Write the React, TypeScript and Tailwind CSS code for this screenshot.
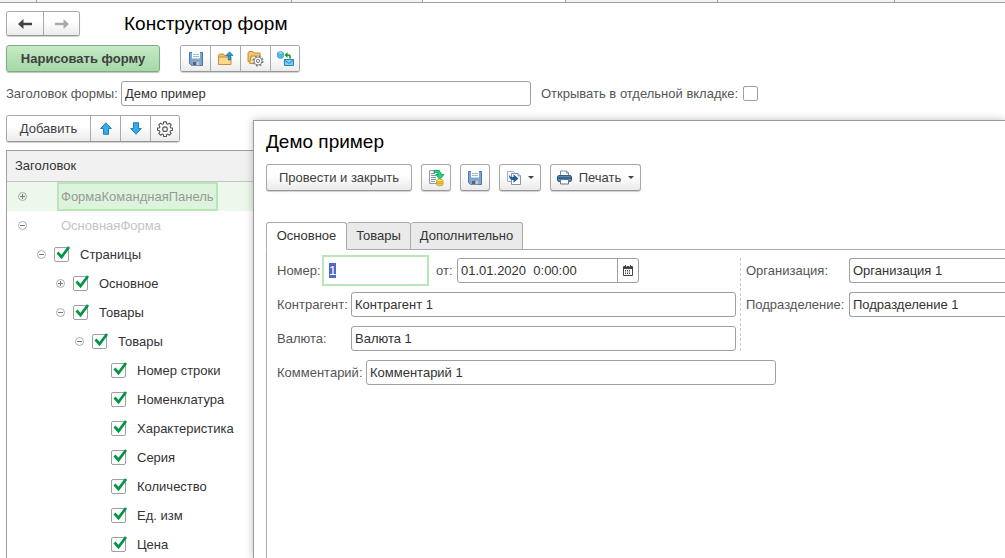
import React, { useEffect, useRef } from "react";

type TreeRow = {
  title: string;
  level: number;
  state?: "open" | "closed";
};

const rows: TreeRow[] = [
  { title: "Страницы", level: 1, state: "open" },
  { title: "Основное", level: 2, state: "closed" },
  { title: "Товары", level: 2, state: "open" },
  { title: "Товары", level: 3, state: "open" },
  { title: "Номер строки", level: 4 },
  { title: "Номенклатура", level: 4 },
  { title: "Характеристика", level: 4 },
  { title: "Серия", level: 4 },
  { title: "Количество", level: 4 },
  { title: "Ед. изм", level: 4 },
  { title: "Цена", level: 4 },
];

const indents = ["pl-[9px]", "pl-[28px]", "pl-[47px]", "pl-[66px]", "pl-[85px]"];

const buttonFace =
  "flex items-center justify-center border-[#a9a9a9] border-b-[#969696] bg-linear-to-b from-white from-40% to-[#ebebeb] text-[#404040]";
const button = `${buttonFace} h-[27px] rounded-[3px] border shadow-[0_1px_1px_#d0d0d0]`;
const group =
  "flex overflow-hidden rounded-[3px] border border-[#a9a9a9] border-b-[#969696] divide-x divide-[#a9a9a9] shadow-[0_1px_1px_#d0d0d0]";
const field =
  "h-[25px] min-w-0 rounded-[3px] border border-[#a0a0a0] bg-white px-[3px] text-[#333] outline-none";
const tab = "rounded-t-[3px] border border-[#aaa]";

const SaveIcon = () => (
  <svg width="16" height="16" viewBox="0 0 16 16" aria-hidden="true">
    <path d="M1.5 1.500h13v13h-11l-2-2z" fill="#7aa6d6" stroke="#4b77a8" />
    <path d="M4 1h8v6.500H4z" fill="#fff" />
    <path d="M5 3.500h6M5 5.500h6" stroke="#a3b9d0" />
    <path d="M4 10h8v4.500H4z" fill="#9aa5b0" />
    <path d="M5 11h3v3H5z" fill="#4e657d" />
    <path d="M9 11h2v3H9z" fill="#c5ccd2" />
  </svg>
);

const FolderUpIcon = () => (
  <svg width="17" height="16" viewBox="0 0 17 16" aria-hidden="true">
    <path d="M1.500 13.500v-9l1-1.500h4l1 1.500h6v9z" fill="#eec06a" stroke="#c58d38" />
    <path d="M1.500 13.500V7l1-1H14v7.500z" fill="#f9d98c" stroke="#c58d38" />
    <path
      d="M12.500 .8 16 4.500h-2.300V9h-2.400V4.500H9z"
      fill="#2499d2"
      stroke="#1674aa"
      strokeWidth=".7"
    />
  </svg>
);

const FolderGearIcon = () => (
  <svg width="17" height="17" viewBox="0 0 17 17" aria-hidden="true">
    <path d="M1 11.500V3l1-1.500h4L7 3h6v8.500z" fill="#f2c56e" stroke="#c58d38" />
    <path d="M2.500 13.500 4 6h10l-1 7.500z" fill="#f9d98c" stroke="#c58d38" />
    <circle cx="11" cy="11" r="5.500" fill="#fff" />
    <circle
      cx="11"
      cy="11"
      r="4.900"
      fill="none"
      stroke="#777"
      strokeWidth="1.300"
      strokeDasharray="2 1.848"
    />
    <circle cx="11" cy="11" r="4" fill="#fff" stroke="#777" strokeWidth=".9" />
    <circle cx="11" cy="11" r="1.600" fill="#fff" stroke="#777" />
  </svg>
);

const SendIcon = () => (
  <svg width="17" height="16" viewBox="0 0 17 16" aria-hidden="true">
    <path d="M.6 2v4c0 1.600 5.800 1.600 5.800 0V2" fill="#55bfec" stroke="#2e93c5" strokeWidth=".8" />
    <ellipse cx="3.500" cy="2" rx="2.900" ry="1.300" fill="#a9e0f8" stroke="#2e93c5" strokeWidth=".8" />
    <path d="M13 7.500V5.500c0-1-.6-1.500-2-1.500H9" fill="none" stroke="#0aa015" strokeWidth="1.600" />
    <path d="M7.500 4 10.500 1v6z" fill="#0aa015" />
    <path d="M7.500 8.500h9v6h-9z" fill="#7ccdf4" stroke="#2788bd" />
    <path d="m7.500 9 4.500 3.500L16.500 9" fill="none" stroke="#2788bd" />
  </svg>
);

const GearIcon = () => (
  <svg width="16" height="16" viewBox="0 0 18 18" fill="none" stroke="#555" aria-hidden="true">
    <path
      d="M7.500 1h3l.4 2.300 1.200.5 1.900-1.300 2 2-1.300 1.900.5 1.200 2.300.4v2.500l-2.300.4-.5 1.200L16 14l-2 2-1.900-1.300-1.200.5-.4 2.300h-3l-.4-2.300-1.200-.5L4 16l-2-2 1.300-1.900-.5-1.200-2.300-.4V8l2.300-.4.5-1.200L2 4.500l2-2 1.900 1.300 1.200-.5z"
      strokeWidth="1.200"
      strokeLinejoin="round"
    />
    <circle cx="9" cy="9.200" r="2.600" strokeWidth="1.200" />
  </svg>
);

const NavArrow = ({ color, flip }: { color: string; flip?: boolean }) => (
  <svg
    width="14"
    height="10"
    viewBox="0 0 14 10"
    className={flip ? "-scale-x-100" : ""}
    aria-hidden="true"
  >
    <path d="M0 5 5.500 0v3.800H14v2.400H5.500V10z" fill={color} />
  </svg>
);

const BlueArrow = ({ flip }: { flip?: boolean }) => (
  <svg
    width="12"
    height="13"
    viewBox="0 0 12 13"
    className={flip ? "-scale-y-100" : ""}
    aria-hidden="true"
  >
    <path d="m6 .8 5.300 5.700H8.500v5.800h-5V6.500H.7z" fill="#38a9ec" stroke="#217fb5" />
  </svg>
);

const PostIcon = () => (
  <svg width="17" height="18" viewBox="0 0 17 18" aria-hidden="true">
    <path d="M1.500 1.500h10v13h-10z" fill="#f4f8fb" stroke="#8b9caf" />
    <path d="M3 4.500h4M3 6.500h5M3 8.500h5M3 10.500h5M3 12.500h4" stroke="#8397ad" />
    <path
      d="M6 1.500c4.500-.6 7 .8 7.300 4H16l-4.200 5-4-5h2.500C10 3.600 8.500 3.200 6 3.500z"
      fill="#20d67a"
      stroke="#109952"
      strokeWidth=".8"
    />
    <path d="M8.500 11.500v4c0 1.700 6.500 1.700 6.500 0v-4" fill="#f4c93c" stroke="#cf9a20" strokeWidth=".8" />
    <path d="M8.500 13.500c0 1.500 6.500 1.500 6.500 0" fill="none" stroke="#cf9a20" strokeWidth=".8" />
    <ellipse cx="11.700" cy="11.400" rx="3.200" ry="1.300" fill="#fbe481" stroke="#cf9a20" strokeWidth=".8" />
  </svg>
);

const CopyIcon = () => (
  <svg width="16" height="16" viewBox="0 0 16 16" aria-hidden="true">
    <path d="M1.500 1.500h6l2 2v8h-8z" fill="#f2f6fa" stroke="#a3b3c2" />
    <path d="M5.500 3.500H12l2.500 2.500v8.500h-9z" fill="#fff" stroke="#8397ab" />
    <path d="M12 3.500V6h2.500" fill="none" stroke="#8397ab" />
    <path d="M3 4.500c.5 2 1.800 2.500 4.500 2.500V4.200l5 4.300-5 4.300V10C4.500 10 3 8.500 3 4.500z" fill="#245f92" />
  </svg>
);

const PrintIcon = () => (
  <svg width="15" height="15" viewBox="0 0 15 15" aria-hidden="true">
    <path d="M3.500 6V1h6l2 2v3" fill="#fff" stroke="#7a8fa5" />
    <path d="M9.500 1v2h2" fill="none" stroke="#7a8fa5" />
    <rect x=".5" y="5.500" width="14" height="6" rx="1.500" fill="#5b8ab6" stroke="#2f5c88" />
    <path d="M1 8h13" stroke="#244b70" strokeWidth="1.200" />
    <path d="M3.500 9.500h8v4.500h-8z" fill="#fff" stroke="#58748f" />
  </svg>
);

const CalendarIcon = () => (
  <svg width="10" height="11" viewBox="0 0 10 11" aria-hidden="true">
    <path d="M1 1h8q1 0 1 1v8q0 1-1 1H1q-1 0-1-1V2q0-1 1-1z" fill="#444" />
    <path d="M1 4h8v6H1z" fill="#fff" />
    <path d="M2 5.500h6M2 7h6M2 8.500h6" stroke="#444" strokeDasharray="1 1" />
    <path d="M2.500 0v2M7.500 0v2" stroke="#444" />
    <path d="M3.500 0v2M6.500 0v2" stroke="#fff" strokeWidth=".6" />
  </svg>
);

const Caret = () => (
  <svg width="6" height="3" viewBox="0 0 6 3" aria-hidden="true">
    <path d="M0 0h6L3 3z" fill="#444" />
  </svg>
);

const Expander = ({ state }: { state?: "open" | "closed" }) => (
  <button
    type="button"
    aria-label={state === "open" ? "Свернуть" : "Развернуть"}
    className="flex w-[13px] justify-center"
  >
    <svg width="9" height="9" viewBox="0 0 9 9" fill="none" aria-hidden="true">
      <circle cx="4.500" cy="4.500" r="4" stroke="#aaa" />
      <path d="M2 4.500h5" stroke="#777" />
      {state === "closed" && <path d="M4.500 2v5" stroke="#777" />}
    </svg>
  </button>
);

const TreeItem = ({ title, level, state }: TreeRow) => (
  <li className={`flex h-[29px] items-center ${indents[level]}`}>
    {state ? <Expander state={state} /> : <span className="w-[13px]" />}
    <label className="flex items-center gap-[11px] pl-[6px]">
      <span className="relative h-[15px] w-[15px]">
        <input
          type="checkbox"
          defaultChecked
          className="peer block h-[15px] w-[15px] appearance-none rounded-[2px] border border-[#a0a0a0] bg-white"
        />
        <svg
          width="17"
          height="16"
          viewBox="0 0 17 16"
          className="pointer-events-none absolute -top-px left-0 hidden peer-checked:block"
          aria-hidden="true"
        >
          <path d="m3.500 6.500 4 4.500L15 1" fill="none" stroke="#009646" strokeWidth="2.700" />
        </svg>
      </span>
      {title}
    </label>
  </li>
);

const Field = ({
  id,
  label,
  value,
  labelClass = "",
  inputClass = "flex-1",
}: {
  id: string;
  label: string;
  value: string;
  labelClass?: string;
  inputClass?: string;
}) => (
  <div className="flex items-center">
    <label htmlFor={id} className={`shrink-0 text-[#555] ${labelClass}`}>
      {label}
    </label>
    <input id={id} defaultValue={value} className={`${field} ${inputClass}`} />
  </div>
);

const DemoWindow = () => {
  const numberRef = useRef<HTMLInputElement>(null);

  useEffect(() => {
    numberRef.current?.focus();
    numberRef.current?.select();
  }, []);

  return (
    <section className="absolute top-[120px] right-0 bottom-0 left-[253px] flex flex-col overflow-hidden border-t border-l border-[#9a9a9a] bg-white pt-2 pl-3 shadow-[0_0_8px_rgba(0,0,0,0.25)]">
      <h2 className="text-[19px] leading-[26px] text-black">Демо пример</h2>

      <div className="mt-[9px] flex gap-[9px]">
        <button type="button" className={`${button} w-[146px]`}>
          Провести и закрыть
        </button>
        <button type="button" aria-label="Провести" className={`${button} w-[30px]`}>
          <PostIcon />
        </button>
        <button type="button" aria-label="Записать" className={`${button} w-[30px]`}>
          <SaveIcon />
        </button>
        <button
          type="button"
          aria-label="Создать на основании"
          className={`${button} w-[42px] gap-[6px]`}
        >
          <CopyIcon />
          <Caret />
        </button>
        <button type="button" className={`${button} w-[91px] gap-[7px]`}>
          <PrintIcon />
          Печать
          <Caret />
        </button>
      </div>

      <div role="tablist" className="relative z-10 mt-[31px] flex h-[28px] text-[#333]">
        <button
          type="button"
          role="tab"
          aria-selected="true"
          className={`${tab} w-[81px] border-b-white bg-white`}
        >
          Основное
        </button>
        <button
          type="button"
          role="tab"
          aria-selected="false"
          className={`${tab} w-[64px] border-l-0 bg-[#eaeaea]`}
        >
          Товары
        </button>
        <button
          type="button"
          role="tab"
          aria-selected="false"
          className={`${tab} w-[112px] border-l-0 bg-[#eaeaea]`}
        >
          Дополнительно
        </button>
      </div>

      <div className="-mt-px flex flex-1 flex-col gap-[9px] border-t border-l border-[#aaa] pt-2 pl-[10px]">
        <div className="flex">
          <div className="flex w-[459px] shrink-0 flex-col gap-[9px]">
            <div className="flex h-[25px] items-center">
              <label htmlFor="number" className="w-[45px] text-[#555]">
                Номер:
              </label>
              <input
                id="number"
                ref={numberRef}
                defaultValue="1"
                className="h-[31px] w-[107px] border-2 border-[#b9e6b9] bg-white px-[5px] text-[#333] outline-none selection:bg-[#5068c8] selection:text-white"
              />
              <label htmlFor="date" className="w-[28px] pl-[7px] text-[#555]">
                от:
              </label>
              <div className="flex h-[25px] w-[182px] overflow-hidden rounded-[3px] border border-[#a0a0a0]">
                <input
                  id="date"
                  defaultValue="01.01.2020  0:00:00"
                  className="min-w-0 flex-1 px-[3px] text-[#333] outline-none"
                />
                <button
                  type="button"
                  aria-label="Выбрать дату"
                  className="flex w-[21px] items-center justify-center border-l border-[#a0a0a0]"
                >
                  <CalendarIcon />
                </button>
              </div>
            </div>
            <Field id="partner" label="Контрагент:" value="Контрагент 1" labelClass="w-[74px]" />
            <Field id="currency" label="Валюта:" value="Валюта 1" labelClass="w-[74px]" />
          </div>

          <div className="ml-1 flex flex-1 flex-col gap-[9px] border-l border-dashed border-[#ccc] pl-[5px]">
            <Field
              id="company"
              label="Организация:"
              value="Организация 1"
              labelClass="w-[103px]"
              inputClass="flex-1 rounded-r-none border-r-0"
            />
            <Field
              id="division"
              label="Подразделение:"
              value="Подразделение 1"
              labelClass="w-[103px]"
              inputClass="flex-1 rounded-r-none border-r-0"
            />
          </div>
        </div>
        <Field
          id="comment"
          label="Комментарий:"
          value="Комментарий 1"
          labelClass="w-[89px]"
          inputClass="w-[410px]"
        />
      </div>
    </section>
  );
};

const App: React.FC = () => {
  return (
    <main className="relative flex h-screen flex-col overflow-hidden bg-white font-['Liberation_Sans',Arial,sans-serif] text-[13px] leading-[16px] text-[#333]">
      <div className="flex h-[3px] shrink-0 divide-x divide-[#a0a0a0] border-b border-[#a0a0a0] bg-[#f2f2f2]">
        <span className="w-[37px]" />
        <span className="w-[255px]" />
        <span className="w-[131px]" />
        <span className="w-[143px] bg-white" />
        <span className="w-[152px]" />
        <span className="w-[177px]" />
        <span className="flex-1" />
      </div>

      <div className="flex min-h-0 flex-1 flex-col pt-2 pl-[6px]">
        <header className="flex items-center gap-[44px]">
          <div className={group}>
            <button type="button" aria-label="Назад" className={`${buttonFace} h-[23px] w-[37px]`}>
              <NavArrow color="#444" />
            </button>
            <button type="button" aria-label="Вперед" className={`${buttonFace} h-[23px] w-[35px]`}>
              <NavArrow color="#aaa" flip />
            </button>
          </div>
          <h1 className="text-[19px] leading-[24px] text-black">Конструктор форм</h1>
        </header>

        <div className="mt-[9px] flex gap-5">
          <button
            type="button"
            className="h-[27px] w-[154px] rounded-[3px] border border-[#7fab82] bg-linear-to-b from-[#c5eac5] to-[#a5d8a8] font-bold text-[#404040] shadow-[0_1px_1px_#c0c0c0]"
          >
            Нарисовать форму
          </button>
          <div className={group}>
            <button type="button" aria-label="Сохранить" className={`${buttonFace} h-[25px] w-[30px]`}>
              <SaveIcon />
            </button>
            <button type="button" aria-label="Открыть" className={`${buttonFace} h-[25px] w-[30px]`}>
              <FolderUpIcon />
            </button>
            <button type="button" aria-label="Настройки" className={`${buttonFace} h-[25px] w-[30px]`}>
              <FolderGearIcon />
            </button>
            <button type="button" aria-label="Отправить" className={`${buttonFace} h-[25px] w-[28px]`}>
              <SendIcon />
            </button>
          </div>
        </div>

        <div className="mt-[9px] flex items-center">
          <Field
            id="form-title"
            label="Заголовок формы:"
            value="Демо пример"
            labelClass="w-[115px]"
            inputClass="w-[410px]"
          />
          <label className="flex items-center gap-[5px] pl-[10px] text-[#555]">
            Открывать в отдельной вкладке:
            <input
              type="checkbox"
              className="h-[15px] w-[15px] appearance-none rounded-[2px] border border-[#a0a0a0]"
            />
          </label>
        </div>

        <div className="mt-[9px] flex">
          <div className={group}>
            <button type="button" className={`${buttonFace} h-[25px] w-[84px]`}>
              Добавить
            </button>
            <button type="button" aria-label="Вверх" className={`${buttonFace} h-[25px] w-[30px]`}>
              <BlueArrow />
            </button>
            <button type="button" aria-label="Вниз" className={`${buttonFace} h-[25px] w-[30px]`}>
              <BlueArrow flip />
            </button>
            <button type="button" aria-label="Настройка" className={`${buttonFace} h-[25px] w-[28px]`}>
              <GearIcon />
            </button>
          </div>
        </div>

        <div className="mt-2 flex-1 border-t border-l border-[#a0a0a0]">
          <div className="flex h-[31px] items-center border-b border-[#c4c4c4] bg-[#f1f1f1] pl-2">
            Заголовок
          </div>
          <ul>
            <li className="flex h-[29px] items-center bg-[#ebf8eb] pl-[9px]">
              <Expander state="closed" />
              <span className="ml-[28px] flex h-[29px] items-center border-2 border-[#b9e6b9] bg-[#dcf4dc] px-[2px] text-[#999]">
                ФормаКоманднаяПанель
              </span>
            </li>
            <li className="flex h-[29px] items-center pl-[9px]">
              <Expander state="open" />
              <span className="ml-[32px] text-[#c4c4c4]">ОсновнаяФорма</span>
            </li>
            {rows.map((row, i) => (
              <TreeItem key={i} {...row} />
            ))}
          </ul>
        </div>
      </div>

      <DemoWindow />
    </main>
  );
};

export default App;
